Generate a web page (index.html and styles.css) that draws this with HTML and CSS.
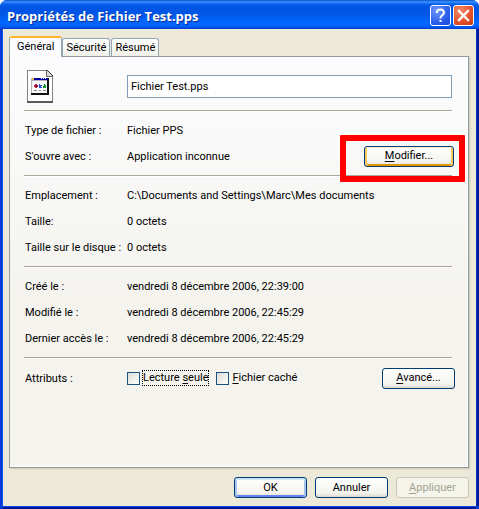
FILE: index.html
```html
<!DOCTYPE html>
<html lang="fr">
<head>
<meta charset="utf-8">
<title>Propriétés de Fichier Test.pps</title>
<link rel="stylesheet" href="styles.css">
</head>
<body>
<main class="window">
  <header class="titlebar">
    <h1 class="title">Propriétés de Fichier Test.pps</h1>
    <button class="caption help" type="button" aria-label="Aide">
      <svg viewBox="0 0 19 19" width="19" height="19" fill="none" stroke="#fff"><path d="M6 7V5.500Q6.500 3.500 9.500 3.500T13 6.500Q13 8 11 9.500T9.500 12.500" stroke-width="2"/><path d="M8.500 15h2" stroke-width="2"/></svg>
    </button>
    <button class="caption close" type="button" aria-label="Fermer">
      <svg viewBox="0 0 19 19" width="19" height="19" fill="none" stroke="#fff"><path d="M5 5l9 9M14 5l-9 9" stroke-width="2.300" stroke-linecap="square"/></svg>
    </button>
  </header>
  <div class="body">
    <div class="tabs" role="tablist">
      <button class="tab active" type="button" role="tab" aria-selected="true">Général</button>
      <button class="tab" type="button" role="tab" aria-selected="false">Sécurité</button>
      <button class="tab" type="button" role="tab" aria-selected="false">Résumé</button>
    </div>
    <section class="panel" role="tabpanel">
      <div class="row name-row">
        <svg class="file-icon" viewBox="0 0 26 33" width="26" height="33" shape-rendering="crispEdges">
          <path d="M0 0h20l6 6v27H0z" fill="#848484"/>
          <path d="M1 1h18v6h6v24H1z" fill="#fff"/>
          <path d="M0 31h26v2H0z" fill="#5a5a5a"/>
          <path d="M20 1l5 5h-5z" fill="#d8d8d4"/>
          <path d="M19 0h1v6h6v1h-7z" fill="#666"/>
          <path d="M20 0h1v1h1v1h1v1h1v1h1v1h1v1h-1v-1h-1v-1h-1v-1h-1v-1h-1v-1h-1z" fill="#333"/>
          <path d="M4 8h18v17H4z" fill="#111"/>
          <path d="M4 8h16v15H4z" fill="#b4b4c0"/>
          <path d="M5 11h15v12H5z" fill="#fafafa"/>
          <path d="M5 8h16v2H5z" fill="#00009c"/>
          <path d="M5 8h2v2H5z" fill="#f0b040"/>
          <path d="M14 8h1v1h-1zM16 8h1v1h-1zM18 8h1v1h-1z" fill="#fff"/>
          <path d="M8 14h2v1h1v2h-1v1H8v-1H7v-2h1z" fill="#c8203c"/>
          <path d="M9 15h2v2H9z" fill="#601048"/>
          <path d="M12 14h1v1h2v1h-1v1h1v1h-3z" fill="#2848e0"/>
          <path d="M17 14h1v1h1v3h-3v-2h1z" fill="#109838"/>
          <path d="M7 20h3v1H7zM12 20h2v1h-2zM16 20h3v1h-3z" fill="#888"/>
        </svg>
        <input class="name" type="text" value="Fichier Test.pps" aria-label="Nom du fichier">
      </div>
      <hr>
      <div class="row"><span>Type de fichier :</span><span>Fichier PPS</span></div>
      <div class="row marked"><span>S'ouvre avec :</span><span>Application inconnue</span>
        <button class="btn wide hot" type="button"><u>M</u>odifier...</button>
        <div class="highlight"></div>
      </div>
      <hr>
      <div class="row"><span>Emplacement :</span><span>C:\Documents and Settings\Marc\Mes documents</span></div>
      <div class="row"><span>Taille:</span><span>0 octets</span></div>
      <div class="row"><span>Taille sur le disque :</span><span>0 octets</span></div>
      <hr>
      <div class="row"><span>Créé le :</span><span>vendredi 8 décembre 2006, 22:39:00</span></div>
      <div class="row"><span>Modifié le :</span><span>vendredi 8 décembre 2006, 22:45:29</span></div>
      <div class="row"><span>Dernier accès le :</span><span>vendredi 8 décembre 2006, 22:45:29</span></div>
      <hr>
      <div class="row attributes"><span>Attributs :</span>
        <div class="checks">
          <input type="checkbox" id="readonly"><label class="focused" for="readonly">Lecture <u>s</u>eule</label>
          <input type="checkbox" id="hidden"><label for="hidden"><u>F</u>ichier caché</label>
        </div>
        <button class="btn" type="button"><u>A</u>vancé...</button>
      </div>
    </section>
    <footer class="actions">
      <button class="btn default" type="button">OK</button>
      <button class="btn" type="button">Annuler</button>
      <button class="btn" type="button" disabled><u>A</u>ppliquer</button>
    </footer>
  </div>
</main>
</body>
</html>
```
FILE: styles.css
```css
* { box-sizing: border-box; }

body {
  margin: 0;
  background: #fff;
  color: #000;
  font: 11px/16px Roboto, "Liberation Sans", sans-serif;
}

button, input { font: inherit; color: inherit; margin: 0; }

u { text-underline-offset: 2px; }

.window {
  display: flex;
  flex-direction: column;
  min-height: 100vh;
  border-radius: 7px 7px 0 0;
  overflow: hidden;
  background: #0839d8;
}

.titlebar {
  display: flex;
  align-items: center;
  gap: 2px;
  height: 29px;
  padding: 2px 5px 0 7px;
  background: linear-gradient(#0a52d0 0, #3a93ff 2px, #0a60ee 4px, #0054e3 7px, #0056e8 14px, #0066ff 22px, #0062fa 26px, #003dd0 29px);
}

.title {
  flex: 1;
  margin: 0;
  color: #fff;
  font: bold 13px/20px "Open Sans", "Noto Sans", sans-serif;
  text-shadow: 1px 1px #0a2a90;
}

.caption {
  width: 21px;
  height: 21px;
  padding: 0;
  border: 1px solid #fff;
  border-radius: 3px;
}

.caption svg { display: block; }
.help { background: radial-gradient(circle at 30% 25%, #7199fb, #2a5eea 60%, #1c49d8); }
.close { background: radial-gradient(circle at 30% 25%, #f08a68, #e2502a 60%, #c23a10); }

.body {
  flex: 1;
  display: flex;
  flex-direction: column;
  margin: 0 3px 3px;
  padding: 7px 7px 8px 6px;
  background: #ece9d8;
  box-shadow: -1px 0 #0a5cf0, 1px 0 #0030d0, 0 1px #0846ee, 0 3px #001890, 3px 0 #001890;
}

.tabs { display: flex; align-items: flex-end; height: 20px; }

.tab {
  height: 18px;
  padding: 0 3px;
  border: 1px solid #91a7b4;
  border-bottom: 0;
  border-radius: 3px 3px 0 0;
  background: linear-gradient(#fff, #f0f0ea);
  margin-right: 1px;
}

.tab.active {
  position: relative;
  height: 21px;
  margin: 0 0 -1px;
  padding: 0 7px 2px;
  border-top: 2px solid #ffb62e;
  background: #fcfcfe;
}

.panel {
  flex: 1;
  padding: 11px 16px 0 14px;
  border: 1px solid #919b9c;
  border-right-color: #8a9a9f;
  background: linear-gradient(#fcfcfe, #f4f3ee 60%);
  box-shadow: inset -1px -1px #fff, 1px 1px #d5d1be, 2px 2px #e1decd;
}

.row {
  display: grid;
  grid-template-columns: 102px 1fr auto;
  align-items: center;
  height: 26px;
  padding-left: 1px;
}

.row > span { padding-top: 1px; }

.name-row { grid-template-columns: 103px 1fr; height: 36px; padding: 0; }
.file-icon { margin-left: 3px; }

.name {
  width: 100%;
  height: 23px;
  padding: 0 3px;
  border: 1px solid #7f9db9;
  border-radius: 0;
  background: #fff;
}

hr { width: 100%; height: 1px; margin: 6px 0; border: 0; background: #aca899; box-shadow: 0 1px #fff; }

.btn {
  width: 73px;
  height: 21px;
  padding: 0;
  border: 1px solid #003c74;
  border-radius: 3px;
  background: linear-gradient(#fff, #f3f3ee 80%, #dcd8cc);
}

.btn.wide { width: 90px; }
.row .btn { margin-right: -3px; }
.row .btn.wide { margin-right: -2px; }
.hot { box-shadow: inset 0 1px #fff0cf, inset 2px 0 #fbc761, inset -2px 0 #fbc761, inset 0 -2px #e59700; }
.default { box-shadow: inset 0 2px #cee7ff, inset 2px 0 #a8c4f4, inset -2px 0 #a8c4f4, inset 0 -2px #6982ee; }
.btn:disabled { border-color: #c9c7ba; background: #f5f4ea; color: #a1a192; }

.marked { position: relative; }
.highlight { position: absolute; top: -8px; right: -13px; width: 125px; height: 47px; border: 6px solid #f00; border-radius: 1px; }

.attributes { height: 28px; }
.checks { display: flex; align-items: center; }

input[type="checkbox"] {
  appearance: none;
  width: 13px;
  height: 13px;
  border: 1px solid #1c5180;
  background: linear-gradient(135deg, #dcdcd7, #fff);
}

.checks label { margin: 0 7px 0 2px; padding: 0; line-height: 14px; border: 1px solid transparent; }
.checks .focused { border: 1px dotted #000; }

.actions { display: flex; justify-content: flex-end; gap: 8px; padding-top: 9px; }
```
